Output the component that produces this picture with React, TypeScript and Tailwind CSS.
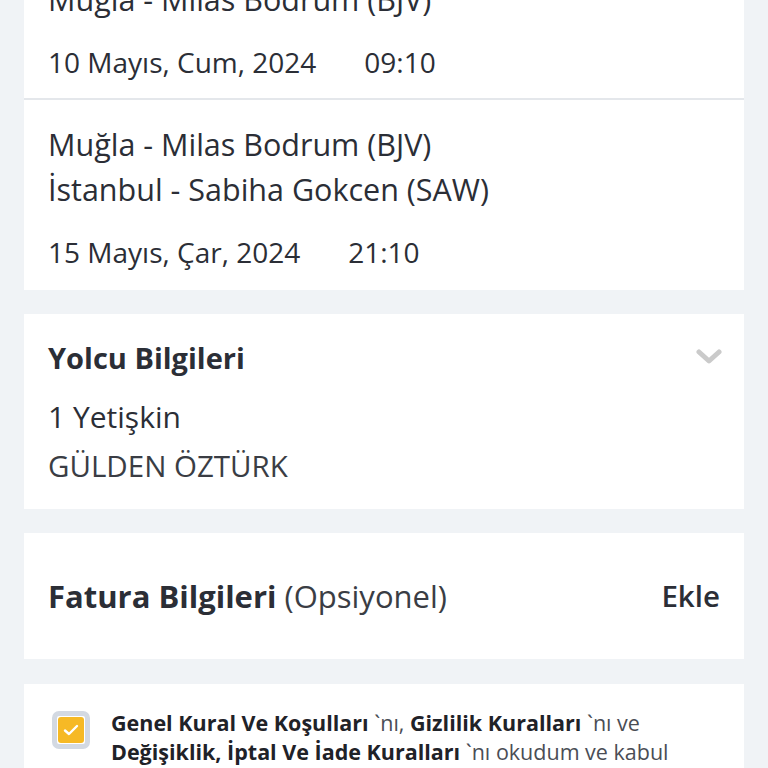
import React from "react";

const font = { fontFamily: '"Open Sans", "Noto Sans", sans-serif' };

interface Segment {
  from: string;
  to: string;
  date: string;
  time: string;
}

const segments: Segment[] = [
  {
    from: "İstanbul - Sabiha Gokcen (SAW)",
    to: "Muğla - Milas Bodrum (BJV)",
    date: "10 Mayıs, Cum, 2024",
    time: "09:10",
  },
  {
    from: "Muğla - Milas Bodrum (BJV)",
    to: "İstanbul - Sabiha Gokcen (SAW)",
    date: "15 Mayıs, Çar, 2024",
    time: "21:10",
  },
];

function FlightSegment({ seg, first }: { seg: Segment; first: boolean }) {
  return (
    <div
      className={`px-6 pt-[22px] ${
        first ? "pb-[13px]" : "border-t-2 border-[#e4e7eb] pb-[15px]"
      }`}
    >
      <div className="text-[30.5px] leading-[45px]">{seg.from}</div>
      <div className="text-[30.5px] leading-[45px]">{seg.to}</div>
      <div className="mt-[18px] flex gap-12 text-[28px] leading-[45px]">
        <span>{seg.date}</span>
        <span>{seg.time}</span>
      </div>
    </div>
  );
}

export default function App() {
  return (
    <div
      className="h-[768px] overflow-hidden bg-[#f0f3f6] px-6 text-[#2b2e36]"
      style={font}
    >
      {/* Flights */}
      <div className="-mt-[90px] bg-white">
        {segments.map((s, i) => (
          <FlightSegment key={i} seg={s} first={i === 0} />
        ))}
      </div>

      {/* Passenger */}
      <div className="mt-6 bg-white px-6 pb-[23px] pt-6">
        <div className="flex items-start justify-between">
          <h2 className="text-[29px] font-bold leading-10">Yolcu Bilgileri</h2>
          <svg
            width="26"
            height="18"
            viewBox="0 0 26 18"
            className="mr-[-2px] mt-[10px]"
            fill="none"
          >
            <path
              d="M3 4 L13 13 L23 4"
              stroke="#cacaca"
              strokeWidth="5"
              strokeLinecap="round"
              strokeLinejoin="round"
            />
          </svg>
        </div>
        <div className="mt-[19px] text-[30px] leading-10">1 Yetişkin</div>
        <div className="mt-[9px] text-[29.5px] leading-10 text-[#3a3d44]">
          GÜLDEN ÖZTÜRK
        </div>
      </div>

      {/* Invoice */}
      <div className="mt-6 flex h-[126px] items-center justify-between bg-white px-6">
        <div className="text-[31px]">
          <span className="font-bold">Fatura Bilgileri</span>{" "}
          <span className="text-[#3a3d44]">(Opsiyonel)</span>
        </div>
        <button className="text-[29.5px] font-semibold">Ekle</button>
      </div>

      {/* Agreement */}
      <div className="mt-[25px] flex gap-[21px] bg-white pb-6 pl-7 pr-6 pt-6">
        <div className="mt-[3px] flex h-[38px] w-[38px] shrink-0 items-center justify-center rounded-[7px] border-[5px] border-[#d3d9e2]">
          <div className="flex h-[26px] w-[26px] items-center justify-center rounded-[3px] bg-[#f6b925]">
            <svg width="16" height="14" viewBox="0 0 16 14" fill="none">
              <path
                d="M2 7.5 L6 11 L14 3"
                stroke="white"
                strokeWidth="2.4"
                strokeLinecap="round"
                strokeLinejoin="round"
              />
            </svg>
          </div>
        </div>
        <p className="text-[21.5px] leading-[29px] text-[#4a4d55]">
          <span className="font-bold text-[#1f2228]">
            Genel Kural Ve Koşulları
          </span>{" "}
          `nı,{" "}
          <span className="font-bold text-[#1f2228]">Gizlilik Kuralları</span>{" "}
          `nı ve{" "}
          <span className="font-bold text-[#1f2228]">
            Değişiklik, İptal Ve İade Kuralları
          </span>{" "}
          `nı okudum ve kabul ediyorum.
        </p>
      </div>
    </div>
  );
}
